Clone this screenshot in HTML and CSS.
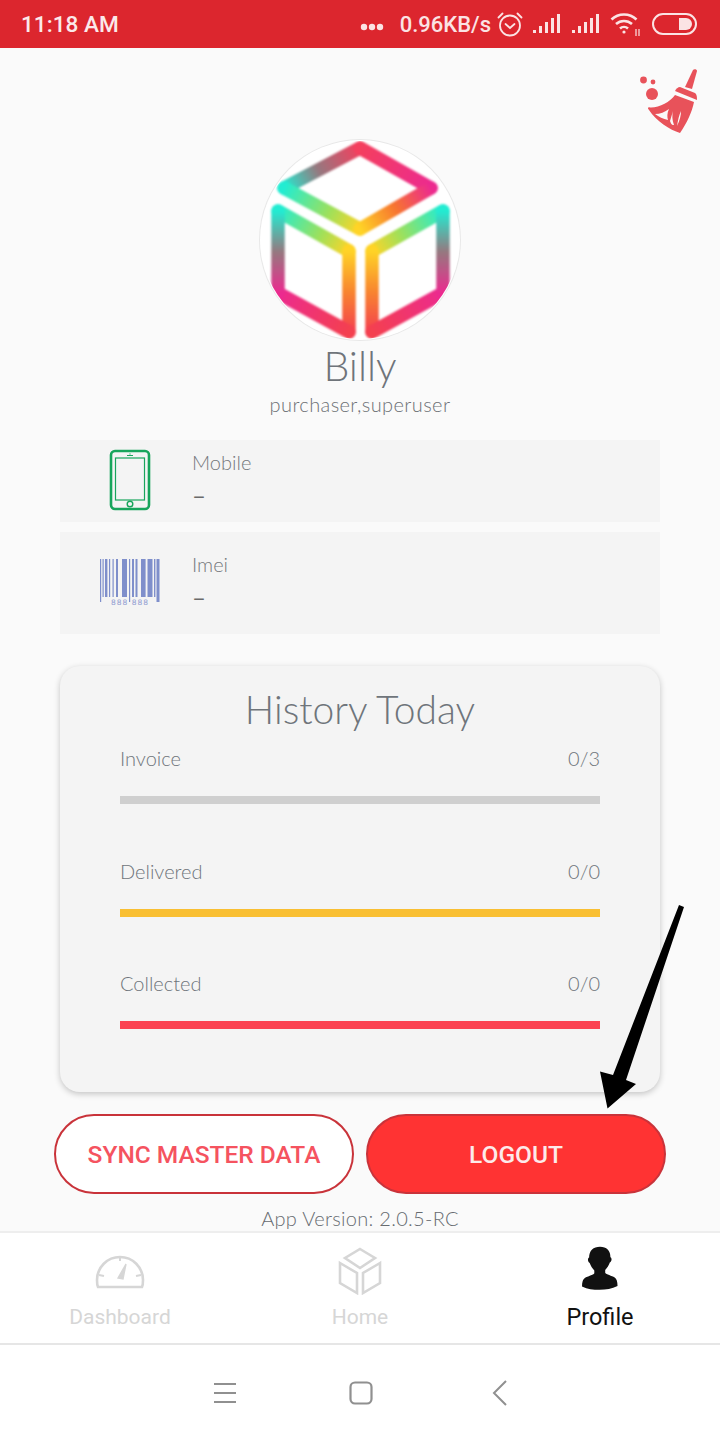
FILE: index.html
```html
<!DOCTYPE html>
<html lang="en">
<head>
<meta charset="utf-8">
<title>Profile</title>
<link rel="stylesheet" href="styles.css">
</head>
<body>
<div class="screen">
  <header class="status">
    <span class="clock">11:18 AM</span>
    <div class="status-right">
      <svg class="dots" width="24" height="8" viewBox="0 0 24 8"><circle cx="4" cy="4" r="3.2"/><circle cx="12" cy="4" r="3.2"/><circle cx="20" cy="4" r="3.2"/></svg>
      <span class="speed">0.96KB/s</span>
      <svg class="ic-alarm" width="28" height="28" viewBox="0 0 28 28" fill="none" stroke="#fbe3e4" stroke-width="1.8" stroke-linecap="round"><circle cx="14" cy="15.5" r="10"/><path d="M9.5 14l4.5 4 4.5-4"/><path d="M2.5 7.5l4-4M25.5 7.5l-4-4"/></svg>
      <svg class="ic-signal" width="28" height="22" viewBox="0 0 28 22" fill="#fbe3e4"><rect x="0" y="17" width="3" height="3"/><rect x="6" y="13" width="3" height="7"/><rect x="12" y="9" width="3" height="11"/><rect x="18" y="5" width="3" height="15"/><rect x="24" y="1" width="3" height="19"/></svg>
      <svg class="ic-signal" width="28" height="22" viewBox="0 0 28 22" fill="#fbe3e4"><rect x="0" y="17" width="3" height="3"/><rect x="6" y="13" width="3" height="7"/><rect x="12" y="9" width="3" height="11"/><rect x="18" y="5" width="3" height="15"/><rect x="24" y="1" width="3" height="19"/></svg>
      <svg class="ic-wifi" width="32" height="26" viewBox="0 0 32 26" fill="none" stroke="#fbe3e4" stroke-width="2.6"><path d="M1.500 8.500a18 18 0 0 1 25 0"/><path d="M6 13a12 12 0 0 1 16 0"/><path d="M10 17.500a6 6 0 0 1 8 0"/><circle cx="14" cy="21" r="1.600" fill="#fbe3e4" stroke="none"/><path d="M26 18v7M29 18v7" stroke-width="1.200"/></svg>
      <svg class="ic-batt" width="46" height="22" viewBox="0 0 46 22"><rect x="1" y="1" width="43" height="20" rx="10" fill="none" stroke="#fbe3e4" stroke-width="2"/><path d="M27 5h7a6 6 0 0 1 0 12h-7z" fill="#fbe3e4"/></svg>
    </div>
  </header>

  <main class="content">
    <div class="top-row">
      <svg class="broom" width="60" height="66" viewBox="0 0 60 66" fill="#e8525a">
        <circle cx="3.500" cy="12" r="3.400"/><circle cx="13" cy="14" r="2.400"/><circle cx="12" cy="26" r="6"/>
        <path d="M53 2c1-1.500 4-1 4 1L52 21l-7-2z"/>
        <path d="M35 23c1-2 3-4 5-4l15 6c1.500 1 2 3 2 7z"/>
        <path d="M35 27L54 34C52 44 47 55 40 65 30 62 16 53 9 42 7 40 8 39 10 39.500 19 40 30 34 35 27z"/>
        <path d="M15 46C20 46 25 44 29 41 27 45 27 49 28 52 23 51 19 49 15 46zM33 43C32 47 32 52 34 57 31 57 31 55 30 53zM41 43C41 47 40 52 37 58 38 52 39 47 41 43z" fill="#fafafa"/>
      </svg>
    </div>

    <div class="avatar">
      <svg width="200" height="200" viewBox="260 140 200 200" fill="none" stroke-width="13.500" stroke-linecap="round">
        <defs>
          <clipPath id="circ"><circle cx="360" cy="240" r="99"/></clipPath>
          <linearGradient id="g1" gradientUnits="userSpaceOnUse" x1="360" y1="148" x2="284" y2="188"><stop offset="0" stop-color="#f43f5e"/><stop offset=".55" stop-color="#96787f"/><stop offset="1" stop-color="#22ecd2"/></linearGradient>
          <linearGradient id="g2" gradientUnits="userSpaceOnUse" x1="360" y1="148" x2="431" y2="188"><stop offset="0" stop-color="#f43f5e"/><stop offset="1" stop-color="#ec2a8f"/></linearGradient>
          <linearGradient id="g3" gradientUnits="userSpaceOnUse" x1="284" y1="188" x2="360" y2="229"><stop offset="0" stop-color="#22ecd2"/><stop offset=".6" stop-color="#9fe05a"/><stop offset="1" stop-color="#ffd426"/></linearGradient>
          <linearGradient id="g4" gradientUnits="userSpaceOnUse" x1="431" y1="188" x2="360" y2="229"><stop offset="0" stop-color="#ec2a8f"/><stop offset=".5" stop-color="#f7752f"/><stop offset="1" stop-color="#ffd426"/></linearGradient>
          <linearGradient id="g5" gradientUnits="userSpaceOnUse" x1="278" y1="211" x2="349" y2="251"><stop offset="0" stop-color="#22ecd2"/><stop offset=".6" stop-color="#9fe05a"/><stop offset="1" stop-color="#ffd426"/></linearGradient>
          <linearGradient id="g6" gradientUnits="userSpaceOnUse" x1="349" y1="251" x2="349" y2="332"><stop offset="0" stop-color="#ffd426"/><stop offset=".5" stop-color="#f8852f"/><stop offset="1" stop-color="#f4404f"/></linearGradient>
          <linearGradient id="g7" gradientUnits="userSpaceOnUse" x1="349" y1="332" x2="278" y2="293"><stop offset="0" stop-color="#f4404f"/><stop offset="1" stop-color="#ec2a8f"/></linearGradient>
          <linearGradient id="g8" gradientUnits="userSpaceOnUse" x1="278" y1="293" x2="278" y2="211"><stop offset="0" stop-color="#ec2a8f"/><stop offset=".5" stop-color="#96787f"/><stop offset="1" stop-color="#22ecd2"/></linearGradient>
          <linearGradient id="g9" gradientUnits="userSpaceOnUse" x1="443" y1="211" x2="372" y2="251"><stop offset="0" stop-color="#22ecd2"/><stop offset=".6" stop-color="#9fe05a"/><stop offset="1" stop-color="#ffd426"/></linearGradient>
          <linearGradient id="g10" gradientUnits="userSpaceOnUse" x1="372" y1="251" x2="372" y2="332"><stop offset="0" stop-color="#ffd426"/><stop offset=".5" stop-color="#f8852f"/><stop offset="1" stop-color="#f4404f"/></linearGradient>
          <linearGradient id="g11" gradientUnits="userSpaceOnUse" x1="372" y1="332" x2="443" y2="293"><stop offset="0" stop-color="#f4404f"/><stop offset="1" stop-color="#ec2a8f"/></linearGradient>
          <linearGradient id="g12" gradientUnits="userSpaceOnUse" x1="443" y1="293" x2="443" y2="211"><stop offset="0" stop-color="#ec2a8f"/><stop offset=".5" stop-color="#96787f"/><stop offset="1" stop-color="#22ecd2"/></linearGradient>
        </defs>
        <g clip-path="url(#circ)" class="cube">
          <path d="M360 148L284 188.010" stroke="url(#g1)"/>
          <path d="M360 148L431 188.010" stroke="url(#g2)"/>
          <path d="M284 188L360 229" stroke="url(#g3)"/>
          <path d="M431 188L360 229" stroke="url(#g4)"/>
          <path d="M278 211L349 251" stroke="url(#g5)"/>
          <path d="M349 251L349.010 332" stroke="url(#g6)"/>
          <path d="M349 332L278 293" stroke="url(#g7)"/>
          <path d="M278 293L278.010 211" stroke="url(#g8)"/>
          <path d="M443 211L372 251" stroke="url(#g9)"/>
          <path d="M372 251L372.010 332" stroke="url(#g10)"/>
          <path d="M372 332L443 293" stroke="url(#g11)"/>
          <path d="M443 293L443.010 211" stroke="url(#g12)"/>
        </g>
      </svg>
    </div>
    <h1 class="name">Billy</h1>
    <p class="role">purchaser,superuser</p>

    <section class="info info-mobile">
      <div class="info-icon">
        <svg width="42" height="62" viewBox="0 0 42 62" fill="none" stroke="#18a55c">
          <rect x="2" y="2" width="38" height="58" rx="4" stroke-width="2.600"/>
          <rect x="6.500" y="9" width="29" height="42" stroke-width="1.200"/>
          <circle cx="21" cy="55" r="2.800" stroke-width="1.400"/>
          <path d="M18 6.500h6M21 4.500v1" stroke-width="1.200"/>
        </svg>
      </div>
      <div class="info-text"><span class="info-label">Mobile</span><span class="info-value">–</span></div>
    </section>
    <section class="info info-imei">
      <div class="info-icon">
        <svg width="62" height="48" viewBox="0 0 62 48" fill="#7f8fcb">
          <rect x="1" y="1" width="1.200" height="43"/><rect x="3.500" y="1" width="1.200" height="38"/><rect x="6" y="1" width="2.400" height="38"/><rect x="10" y="1" width="1.200" height="38"/><rect x="13.500" y="1" width="1.200" height="38"/><rect x="17" y="1" width="2" height="38"/><rect x="23" y="1" width="5" height="38"/><rect x="30" y="1" width="1.200" height="43"/><rect x="33" y="1" width="2" height="38"/><rect x="36.500" y="1" width="2" height="38"/><rect x="42" y="1" width="4.600" height="38"/><rect x="48.500" y="1" width="5" height="38"/><rect x="55" y="1" width="1.400" height="38"/><rect x="57.500" y="1" width="3" height="43"/>
          <text x="31" y="46.500" text-anchor="middle" class="barcode-digits">888 888</text>
        </svg>
      </div>
      <div class="info-text"><span class="info-label">Imei</span><span class="info-value">–</span></div>
    </section>

    <section class="history">
      <h2 class="history-title">History Today</h2>
      <div class="stat">
        <div class="stat-head"><span>Invoice</span><span>0/3</span></div>
        <div class="bar bar-grey"></div>
      </div>
      <div class="stat">
        <div class="stat-head"><span>Delivered</span><span>0/0</span></div>
        <div class="bar bar-yellow"></div>
      </div>
      <div class="stat">
        <div class="stat-head"><span>Collected</span><span>0/0</span></div>
        <div class="bar bar-red"></div>
      </div>
    </section>

    <div class="actions">
      <button class="btn btn-outline">SYNC MASTER DATA</button>
      <button class="btn btn-solid">LOGOUT</button>
    </div>
    <p class="version">App Version: 2.0.5-RC</p>
  </main>

  <nav class="tabs">
    <div class="tab">
      <svg class="tab-ic-gauge" width="50" height="40" viewBox="0 0 50 40" fill="none" stroke="#d6d6d6" stroke-width="2.600">
        <path d="M3 36c-1-2-1-5-1-7a23 23 0 0 1 46 0c0 2 0 5-1 7z"/>
        <path d="M25 5v5M4 24l5 1M46 24l-5 1" stroke-width="2"/>
        <path d="M23 27l8-14-3 15z" fill="#d6d6d6" stroke-width="1.400"/>
      </svg>
      <span class="tab-label">Dashboard</span>
    </div>
    <div class="tab">
      <svg class="tab-ic-home" width="44" height="48" viewBox="0 0 44 48" fill="none" stroke="#d6d6d6" stroke-width="2.600">
        <path d="M22 2L37 11 22 21 7 11z"/>
        <path d="M2 16L19 26V46L2 36z"/>
        <path d="M42 16L25 26V46L42 36z"/>
      </svg>
      <span class="tab-label">Home</span>
    </div>
    <div class="tab tab-active">
      <svg class="tab-ic-user" width="36" height="47" viewBox="0 0 38 48" fill="#111">
        <path d="M19 1c7 0 11 4 11 11 1 .5 1.500 2 1 3.500-.4 1-1 2-1.500 2-1 3-3 6-5 8v3c1 2 7 3 10 5 2 1.500 3 4 3 9-6 3-12 4-19 4S6 46 0 43c0-5 1-7.500 3-9 3-2 9-3 10-5v-3c-2-2-4-5-5-8-.5 0-1.100-1-1.500-2-.5-1.500 0-3 1-3.500C7.500 5 12 1 19 1z"/>
      </svg>
      <span class="tab-label">Profile</span>
    </div>
  </nav>

  <footer class="sysnav">
    <svg width="24" height="22" viewBox="0 0 24 22" stroke="#909090" stroke-width="2"><path d="M1 2h22M1 11h22M1 20h22"/></svg>
    <svg width="24" height="24" viewBox="0 0 24 24" fill="none" stroke="#909090" stroke-width="2.200"><rect x="1.500" y="1.500" width="21" height="21" rx="4.500"/></svg>
    <svg class="nav-back" width="16" height="26" viewBox="0 0 16 26" fill="none" stroke="#909090" stroke-width="2"><path d="M14 1L2 13l12 12"/></svg>
  </footer>

  <svg class="arrow" width="100" height="220" viewBox="590 895 100 220" fill="#000"><path d="M679 905L684 907 626 1080 636 1084 607.500 1108.500 600 1071.500 613 1075z"/></svg>
</div>
</body>
</html>
```
FILE: styles.css
```css
* { box-sizing: border-box; }
html, body { margin: 0; padding: 0; }
body { background: #fafafa; font-family: "Lato", "Liberation Sans", sans-serif; }
.screen { position: relative; width: 720px; height: 1440px; overflow: hidden; display: flex; flex-direction: column; background: #fafafa; }

.status { height: 48px; flex: none; background: #dc262e; display: flex; align-items: center; justify-content: space-between; padding: 0 22px 0 21px; color: #fbe3e4; font-family: "Roboto", sans-serif; font-weight: 500; font-size: 22.600px; }
.clock { color: #fbe9ea; }
.status-right { display: flex; align-items: center; }
.dots { fill: #fbe3e4; margin: 6px 16px 0 0; }
.speed { margin-right: 5px; font-size: 22px; }
.ic-alarm { margin-right: 9px; }
.ic-signal { margin-right: 11px; }
.ic-wifi { margin-right: 10px; margin-left: -1px; }

.content { flex: none; height: 1183px; display: flex; flex-direction: column; align-items: center; }
.top-row { align-self: stretch; height: 92px; display: flex; justify-content: flex-end; padding: 20px 20px 0 0; }
.broom { display: block; }
.avatar { width: 200px; height: 200px; flex: none; border-radius: 50%; background: #fff; box-shadow: 0 0 0 1px #e8e8e8; overflow: hidden; }
.avatar svg { display: block; }
.cube { filter: blur(.8px); }
.name { margin: 0; height: 56px; line-height: 52px; font-size: 41px; font-weight: 300; color: #6f747a; }
.role { margin: 0 0 24px; height: 20px; line-height: 17px; font-size: 20px; font-weight: 300; letter-spacing: .4px; color: #6c7075; }

.info { width: 600px; flex: none; background: #f4f4f4; display: flex; align-items: center; }
.info-mobile { height: 82px; margin-bottom: 10px; }
.info-imei { height: 102px; margin-bottom: 32px; align-items: flex-start; padding-top: 26px; }
.info-icon { width: 132px; flex: none; display: flex; justify-content: center; padding-left: 8px; }
.info-mobile .info-icon { margin-top: -2px; }
.info-imei .info-icon { align-self: flex-start; }
.info-icon svg { display: block; }
.barcode-digits { font-family: "DejaVu Sans", sans-serif; font-size: 7.500px; fill: #8f9bd0; letter-spacing: 1px; }
.info-text { display: flex; flex-direction: column; }
.info-mobile .info-text { margin-top: 4px; }
.info-imei .info-text { margin-top: -6px; }
.info-label { font-size: 20px; font-weight: 300; line-height: 24px; color: #74787c; }
.info-value { font-size: 24px; line-height: 42px; font-weight: 400; color: #6a6a6a; }

.history { width: 600px; height: 426px; flex: none; background: #f4f4f4; border-radius: 20px; box-shadow: 0 2px 6px rgba(0,0,0,.22); padding: 18px 60px 0; }
.history-title { margin: 0 0 11px; height: 50px; line-height: 50px; text-align: center; font-size: 39px; font-weight: 300; color: #6f757b; }
.stat { height: 112.500px; }
.stat-head { display: flex; justify-content: space-between; height: 26px; line-height: 26px; font-size: 20px; font-weight: 300; color: #6f757b; }
.bar { height: 8px; margin-top: 25px; }
.bar-grey { background: #cfcfcf; }
.bar-yellow { background: #f9bf32; }
.bar-red { background: #fb4252; }

.actions { align-self: stretch; display: flex; gap: 12px; padding: 0 54px; margin-top: 22px; }
.btn { flex: 1; height: 80px; border-radius: 40px; border: 2px solid #c9333a; padding-top: 2px; font-family: "Roboto", sans-serif; font-weight: 500; font-size: 24.500px; }
.btn-outline { background: #fff; color: #f5535f; }
.btn-solid { background: #ff3333; color: #fdeaea; }
.version { margin: 13px 0 0; height: 22px; line-height: 22px; font-size: 20px; font-weight: 300; letter-spacing: .3px; color: #666b70; }

.tabs { flex: none; height: 114px; display: flex; background: #fff; border-top: 2px solid #eeeeee; border-bottom: 2px solid #e6e6e6; }
.tab { flex: 1; display: flex; flex-direction: column; align-items: center; justify-content: flex-end; padding-bottom: 13px; }
.tab svg { display: block; }
.tab-ic-gauge { margin-bottom: 13px; }
.tab-ic-home { margin-bottom: 9px; }
.tab-ic-user { margin-bottom: 12px; }
.tab-label { font-family: "Roboto", sans-serif; font-size: 21px; line-height: 26px; color: #d6d6d6; }
.tab-active .tab-label { color: #111; font-size: 23.500px; }

.sysnav { flex: 1; background: #fff; display: flex; align-items: center; padding: 0 0 0 213px; gap: 112px; }
.sysnav svg { display: block; flex: none; }
.nav-back { margin-left: 7px; }

.arrow { position: absolute; left: 590px; top: 895px; }
```
